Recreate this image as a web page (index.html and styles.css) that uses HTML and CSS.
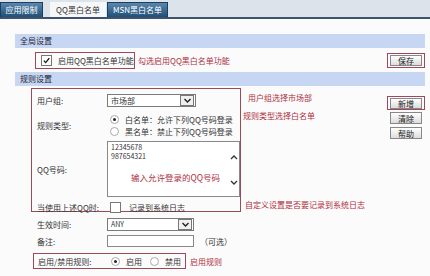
FILE: index.html
```html
<!DOCTYPE html>
<html lang="zh-CN">
<head>
    <meta charset="UTF-8">
    <title>QQ黑白名单</title>
    <link rel="stylesheet" href="styles.css">
</head>
<body>

    <div class="tabs">
        <span class="tab">应用限制</span>
        <span class="tab active">QQ黑白名单</span>
        <span class="tab">MSN黑白名单</span>
    </div>

    <div class="content">
        <div class="sec-head">全局设置</div>
        <div class="global-row">
            <div class="mark enable-qq">
                <span class="cb"><svg width="9" height="9" viewBox="0 0 9 9"><path d="M1.8 4.6 L3.7 6.6 L7.3 2.2" fill="none" stroke="#111" stroke-width="1.3"/></svg></span>
                <span>启用QQ黑白名单功能</span>
            </div>
            <span class="note note-global">勾选启用QQ黑白名单功能</span>
            <div class="mark save-wrap"><button class="btn">保存</button></div>
        </div>

        <div class="sec-head">规则设置</div>
        <div class="rules">
            <div class="mark form-box">
                <div class="row row-group">
                    <span class="lbl">用户组:</span>
                    <div class="select sel-group">
                        <span>市场部</span>
                        <span class="arrow"><svg width="9" height="7" viewBox="0 0 9 7"><path d="M1.5 2 L4.5 5 L7.5 2" fill="none" stroke="#222" stroke-width="1.4"/></svg></span>
                    </div>
                </div>
                <div class="row row-type">
                    <span class="lbl">规则类型:</span>
                    <div class="radios">
                        <div class="radio-line"><span class="radio on"></span>白名单：允许下列QQ号码登录</div>
                        <div class="radio-line"><span class="radio"></span>黑名单：禁止下列QQ号码登录</div>
                    </div>
                </div>
                <div class="row row-qq">
                    <span class="lbl">QQ号码:</span>
                    <div class="textarea">
                        <div class="ta-text">
                            <div>12345678</div>
                            <div>987654321</div>
                            <div class="note ta-note">输入允许登录的QQ号码</div>
                        </div>
                        <div class="ta-scroll">
                            <svg width="8" height="6" viewBox="0 0 8 6"><path d="M1 5 L4 2 L7 5" fill="none" stroke="#333" stroke-width="1.3"/></svg>
                            <svg width="8" height="6" viewBox="0 0 8 6"><path d="M1 1 L4 4 L7 1" fill="none" stroke="#333" stroke-width="1.3"/></svg>
                        </div>
                    </div>
                </div>
                <div class="row row-log">
                    <span class="lbl">当使用上述QQ时:</span>
                    <span class="cb"></span>
                    <span>记录到系统日志</span>
                </div>
            </div>

            <div class="notes">
                <div class="note note-group">用户组选择市场部</div>
                <div class="note note-type">规则类型选择白名单</div>
                <div class="note note-log">自定义设置是否要记录到系统日志</div>
            </div>

            <div class="btns">
                <div class="mark add-wrap"><button class="btn">新增</button></div>
                <button class="btn">清除</button>
                <button class="btn">帮助</button>
            </div>
        </div>

        <div class="row row-time">
            <span class="lbl">生效时间:</span>
            <div class="select sel-time">
                <span>ANY</span>
                <span class="arrow"><svg width="9" height="7" viewBox="0 0 9 7"><path d="M1.5 2 L4.5 5 L7.5 2" fill="none" stroke="#222" stroke-width="1.4"/></svg></span>
            </div>
        </div>
        <div class="row row-memo">
            <span class="lbl">备注:</span>
            <div class="input"></div>
            <span class="optional">（可选）</span>
        </div>
        <div class="enable-line">
            <div class="mark enable-rule">
                <span class="lbl">启用/禁用规则:</span>
                <span class="radio on"></span><span class="opt">启用</span>
                <span class="radio"></span><span class="opt">禁用</span>
            </div>
            <span class="note note-enable">启用规则</span>
        </div>
    </div>

</body>
</html>
```

FILE: styles.css
```css
body {
    margin: 0;
    background: #fbfbfc;
    font-family: "Noto Sans CJK SC", "Noto Sans", sans-serif;
    font-size: 8px;
    line-height: 11px;
    white-space: nowrap;
    color: #333;
}
.tabs {
    display: flex;
    align-items: flex-end;
    height: 17px;
    background: #dde3ea;
    border-bottom: 2px solid #3c5369;
}
.tab {
    height: 14px;
    line-height: 14px;
    text-align: center;
    color: #fff;
    background: linear-gradient(#5b87ad, #1f4f77);
    border: 1px solid #1b3f5e;
    border-bottom: none;
}
.tab:nth-child(1) {
    width: 41px;
}
.tab:nth-child(2) {
    width: 54px;
    margin-left: 7px;
}
.tab:nth-child(3) {
    width: 59px;
    margin-left: 1px;
}
.tab.active {
    background: #f6f7f8;
    color: #333;
    border-color: #f6f7f8;
}
.content {
    padding: 0 5px 0 15px;
}
.sec-head {
    height: 14px;
    line-height: 14px;
    padding-left: 5px;
    background: #c7d6f2;
    color: #223;
}
.content > .sec-head:first-child {
    margin-top: 15px;
}
.mark {
    border: 1px solid #9c4a5a;
    box-sizing: border-box;
}
.note {
    color: #ad2f3d;
}
.global-row {
    display: flex;
    align-items: center;
    height: 24px;
}
.enable-qq {
    display: flex;
    align-items: center;
    width: 100px;
    height: 17px;
    margin-left: 20px;
    padding-left: 5px;
    gap: 6px;
}
.cb {
    display: inline-block;
    flex-shrink: 0;
    width: 9px;
    height: 9px;
    border: 1px solid #777;
    background: #fff;
}
.cb svg {
    display: block;
}
.note-global {
    margin-left: 3px;
}
.save-wrap {
    margin-left: auto;
    width: 38px;
    height: 15px;
    display: flex;
    align-items: center;
    justify-content: center;
}
.btn {
    width: 32px;
    height: 11px;
    padding: 0;
    font-family: inherit;
    font-size: 8px;
    line-height: 9px;
    color: #222;
    background: linear-gradient(#ffffff, #dcdcdc);
    border: 1px solid #888;
}
.rules {
    display: flex;
    margin-top: 2px;
}
.form-box {
    width: 210px;
    height: 124px;
    margin-left: 16px;
    padding: 3px 0 0 5px;
}
.row {
    display: flex;
    align-items: center;
}
.lbl {
    width: 70px;
    flex-shrink: 0;
}
.select {
    display: flex;
    align-items: center;
    justify-content: space-between;
    height: 13px;
    padding-left: 3px;
    box-sizing: border-box;
    background: #fff;
    border: 1px solid #7a7a7a;
}
.arrow {
    display: flex;
    align-items: center;
    justify-content: center;
    width: 12px;
    height: 9px;
    margin-right: 1px;
    border: 1px solid #777;
    background: #f0f0f0;
}
.sel-group {
    width: 89px;
}
.row-group {
    height: 17px;
}
.row-type {
    height: 28px;
    margin-top: 2px;
}
.radios {
    display: flex;
    flex-direction: column;
    gap: 1px;
}
.radio-line {
    display: flex;
    align-items: center;
    height: 11px;
}
.radio {
    display: inline-block;
    flex-shrink: 0;
    width: 7px;
    height: 7px;
    border: 1px solid #aaa;
    border-radius: 50%;
    background: #fff;
    margin: 0 6px 0 3px;
    position: relative;
}
.radio.on::after {
    content: "";
    position: absolute;
    left: 2px;
    top: 2px;
    width: 3px;
    height: 3px;
    border-radius: 50%;
    background: #222;
}
.row-qq {
    height: 57px;
    margin-top: 2px;
}
.textarea {
    display: flex;
    width: 134px;
    height: 56px;
    box-sizing: border-box;
    background: #fff;
    border: 1px solid #888;
    align-self: flex-start;
}
.ta-text {
    flex: 1;
    padding: 1px 0 0 3px;
    font-size: 7px;
    line-height: 9px;
}
.ta-note {
    font-size: 8.5px;
    margin: 12px 0 0 20px;
}
.ta-scroll {
    width: 11px;
    display: flex;
    flex-direction: column;
    justify-content: space-between;
    align-items: center;
    padding: 12px 0 10px;
}
.row-log {
    height: 16px;
    margin-top: 1px;
}
.row-log .cb {
    margin: 0 8px 0 3px;
}
.notes {
    width: 146px;
    flex-shrink: 0;
}
.note-group {
    margin: 4px 0 0 7px;
}
.note-type {
    margin: 7px 0 0 2px;
}
.note-log {
    margin: 78px 0 0 4px;
}
.btns {
    display: flex;
    flex-direction: column;
    align-items: center;
    gap: 3px;
    width: 38px;
    margin-left: auto;
    padding-top: 8px;
}
.add-wrap {
    width: 38px;
    height: 14px;
    display: flex;
    align-items: center;
    justify-content: center;
    margin-bottom: -1px;
}
.btns > .btn {
    height: 12px;
}
.row-time {
    height: 17px;
    margin-top: 4px;
}
.row-time .lbl,
.row-memo .lbl {
    margin-left: 22px;
}
.sel-time {
    width: 87px;
    font-size: 7px;
}
.row-memo {
    height: 16px;
}
.input {
    width: 85px;
    height: 10px;
    background: #fff;
    border: 1px solid #888;
}
.optional {
    margin-left: 6px;
}
.enable-line {
    display: flex;
    align-items: center;
    margin-top: 4px;
}
.enable-rule {
    display: flex;
    align-items: center;
    width: 153px;
    height: 16px;
    margin-left: 18px;
    padding-left: 4px;
}
.opt {
    margin-right: 5px;
}
.note-enable {
    margin-left: 4px;
}
```
